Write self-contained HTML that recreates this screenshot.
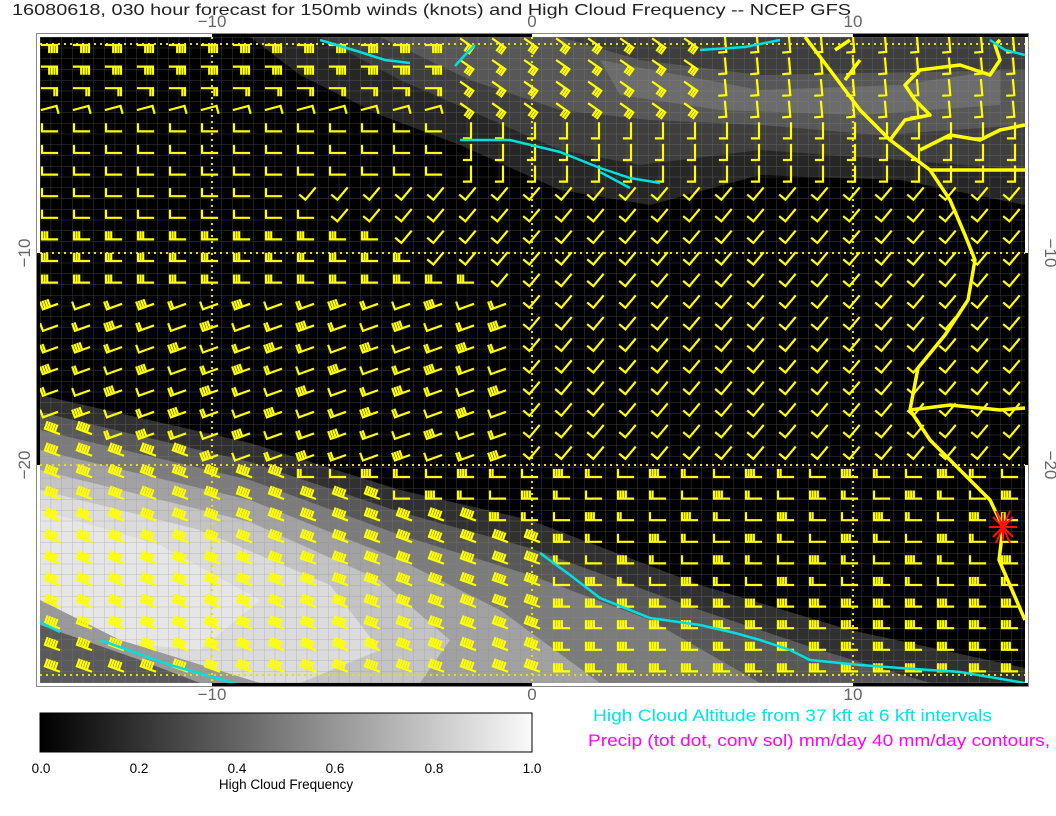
<!DOCTYPE html>
<html><head><meta charset="utf-8"><style>
html,body{margin:0;padding:0;background:#fff;width:1056px;height:816px;overflow:hidden}
svg{position:absolute;left:0;top:0}
text{font-family:"Liberation Sans",sans-serif}
</style></head><body>
<svg id="s" width="1056" height="816" viewBox="0 0 1056 816" xmlns="http://www.w3.org/2000/svg">
<defs>
<linearGradient id="cb" x1="0" x2="1" y1="0" y2="0"><stop offset="0" stop-color="#000"/><stop offset="1" stop-color="#fafafa"/></linearGradient>
<pattern id="grid" x="40" y="37" width="10.67" height="10.75" patternUnits="userSpaceOnUse"><path d="M0 0H10.67M0 0V10.75" stroke="#8a8a8a" stroke-opacity="0.45" stroke-width="1" fill="none"/></pattern>
<clipPath id="pc"><rect x="40" y="37" width="985" height="646"/></clipPath>
</defs>
<text x="12" y="15" font-size="16" fill="#222" textLength="839" lengthAdjust="spacingAndGlyphs">16080618, 030 hour forecast for 150mb winds (knots) and High Cloud Frequency -- NCEP GFS</text>
<g font-size="17" fill="#666" text-anchor="middle">
<text x="212" y="27">−10</text><text x="532" y="27">0</text><text x="853" y="27">10</text>
<text x="212" y="700">−10</text><text x="532" y="700">0</text><text x="853" y="700">10</text>
<text transform="translate(30,253) rotate(-90)">−10</text><text transform="translate(30,465) rotate(-90)">−20</text>
<text transform="translate(1045,253) rotate(90)">−10</text><text transform="translate(1045,465) rotate(90)">−20</text>
</g>
<rect x="36.5" y="33.5" width="992" height="653" fill="#fff" stroke="#888"/>
<g fill="#000">
<rect x="212" y="34" width="320" height="3"/><rect x="853" y="34" width="175" height="3"/>
<rect x="212" y="683" width="320" height="3"/><rect x="853" y="683" width="175" height="3"/>
<rect x="37" y="253" width="3" height="212"/><rect x="1025" y="253" width="3" height="212"/>
</g>
<g clip-path="url(#pc)">
<rect x="40" y="37" width="985" height="646" fill="#000"/>
<polygon fill="#262626" points="250,37 1025,37 1025,205 900,180 760,175 650,205 560,190 460,145 380,115 300,75"/>
<polygon fill="#3e3e3e" points="320,37 1025,37 1025,170 900,160 760,150 640,165 560,150 480,115 400,80"/>
<polygon fill="#575757" points="380,37 560,37 640,60 760,75 1025,70 1025,125 880,135 760,125 650,120 560,110 470,80"/>
<polygon fill="#6c6c6c" points="600,60 760,90 900,85 1000,70 1000,105 860,115 720,110 620,95"/>
<polygon fill="#303030" points="40,395 250,443 400,490 530,520 700,585 850,630 1025,668 1025,683 40,683"/>
<polygon fill="#585858" points="40,412 250,462 400,512 530,548 700,610 820,650 930,683 40,683"/>
<polygon fill="#7c7c7c" points="40,430 250,480 400,535 530,575 650,620 760,683 40,683"/>
<polygon fill="#a2a2a2" points="40,450 250,500 400,560 500,610 600,683 40,683"/>
<polygon fill="#c4c4c4" points="40,470 250,522 380,580 450,640 420,683 40,683"/>
<polygon fill="#dcdcdc" points="40,490 200,530 330,585 380,650 300,683 110,683 40,640"/>
<polygon fill="#e6e6e6" points="40,510 160,545 260,600 200,650 90,640 40,600"/>
<polygon fill="#9a9a9a" points="40,600 120,640 260,683 40,683"/>
<polygon fill="#5a5a5a" points="40,625 140,660 200,683 40,683"/>
<rect x="40" y="37" width="985" height="646" fill="url(#grid)"/>
<g stroke="#e8e000" stroke-width="2" stroke-dasharray="2,4" fill="none">
<path d="M212 37V683M532 37V683M853 37V683M40 44H1025M40 253H1025M40 465H1025M40 675H1025"/>
</g>
<g id="barbs" stroke="#ffff00" stroke-width="2.2" fill="none" stroke-linecap="square"></g>
<g stroke="#ffff00" stroke-width="3.5" fill="none" stroke-linejoin="round">
<path d="M805,37 L830,70 L860,110 L890,140 L930,170 L950,200 L965,235 L975,260 L968,300 L945,335 L918,368 L910,410 L930,440 L960,470 L990,500 L1003,527 L999,560 L1012,590 L1025,620"/>
<path d="M930,170 L1025,170"/><path d="M910,410 L950,405 L1000,410 L1025,408"/>
<path d="M890,140 L905,120 L930,115 L915,100 L905,85 L920,70 L960,65 L990,75 L1000,60 L995,45 L1000,40"/>
<path d="M920,150 L950,135 L980,140 L1000,130 L1025,125"/>
<path d="M835,50 L850,40 M845,80 L860,60"/>
</g>
<g stroke="#00e0e0" stroke-width="2.5" fill="none">
<path d="M320,40 L360,52 L385,60 L410,63"/><path d="M455,66 L465,55 L475,45"/>
<path d="M460,140 L510,140 L560,152 L600,168 L630,178 L660,183"/><path d="M600,172 L630,188"/>
<path d="M700,50 L745,47 L780,40"/><path d="M990,40 L1005,50 L1025,55"/>
<path d="M540,553 L570,575 L600,598 L650,618 L700,625 L735,633 L760,640 L790,650 L810,660 L860,665 L900,668 L960,672 L1025,683"/>
<path d="M40,622 L60,632"/><path d="M100,640 L170,665 L240,685"/>
</g>
<g stroke="#ff1010" stroke-width="2"><path d="M989,527H1017M1003,513V541M993,517L1013,537M993,537L1013,517M996,511L1010,543M996,543L1010,511"/></g>
</g>
<rect x="40" y="713" width="492" height="39" fill="url(#cb)" stroke="#000" stroke-width="1"/>
<g font-size="13.5" fill="#000" text-anchor="middle">
<text x="41" y="773">0.0</text><text x="139" y="773">0.2</text><text x="237" y="773">0.4</text><text x="335" y="773">0.6</text><text x="434" y="773">0.8</text><text x="532" y="773">1.0</text>
<text x="286" y="789">High Cloud Frequency</text>
</g>
<text x="593" y="721" font-size="17" fill="#00e5e5" textLength="399" lengthAdjust="spacingAndGlyphs">High Cloud Altitude from 37 kft at 6 kft intervals</text>
<text x="588" y="746" font-size="17" fill="#ff00ff" textLength="462" lengthAdjust="spacingAndGlyphs">Precip (tot dot, conv sol) mm/day 40 mm/day contours,</text>
</svg>
<script>
(function(){
var g=document.getElementById('barbs'),d='';
for(var j=0;j<30;j++){for(var i=0;i<31;i++){
var x=57+32*i,y=45+21.6*j,a,n,L=15;
var checkX=Math.min(530,240+(y-178)*2.3);
if(y<100&&x<470){a=0;n=j<2?4:2;x-=15;}
else if(y<125&&x<470){a=-15;n=1;x-=15;}
else if(y<130&&x>=470&&x<700){a=35;n=3;x-=12;y-=6;}
else if(y<130&&x>=700){a=85;n=1;x-=4;y-=8;}
else if(y<175&&x>=470){a=90;n=1;x-=2;y-=8;}
else if(y<175){a=180;n=1;}
else if(y<470&&x>=checkX){a=130;n=1;x+=2;y-=8;}
else if(y>415+(x-40)*0.24&&x<560){a=200;n=5;x+=2;}
else if(y<470&&x<530){
  if(y<220){a=180;n=1;}
  else if(y<300){a=180;n=3;}
  else {a=160;n=(i+j)%3==0?4:((i+j)%2?1:2);}
}
else {a=180;n=((i+j)%3==0)?4:((i+j)%3==1?2:1);if(y>590)n=4;}
var r=a*Math.PI/180,c=Math.cos(r),s=Math.sin(r);
var fx=x+L*c,fy=y+L*s;d+='M'+x.toFixed(1)+' '+y.toFixed(1)+'L'+fx.toFixed(1)+' '+fy.toFixed(1);
var pc=Math.cos(r+Math.PI/2),ps=Math.sin(r+Math.PI/2);
for(var k=0;k<n;k++){var bx=fx-k*2.6*c,by=fy-k*2.6*s;d+='M'+bx.toFixed(1)+' '+by.toFixed(1)+'l'+(7*pc).toFixed(1)+' '+(7*ps).toFixed(1);}
}}
var p=document.createElementNS('http://www.w3.org/2000/svg','path');p.setAttribute('d',d);g.appendChild(p);
})();
</script>
</body></html>
